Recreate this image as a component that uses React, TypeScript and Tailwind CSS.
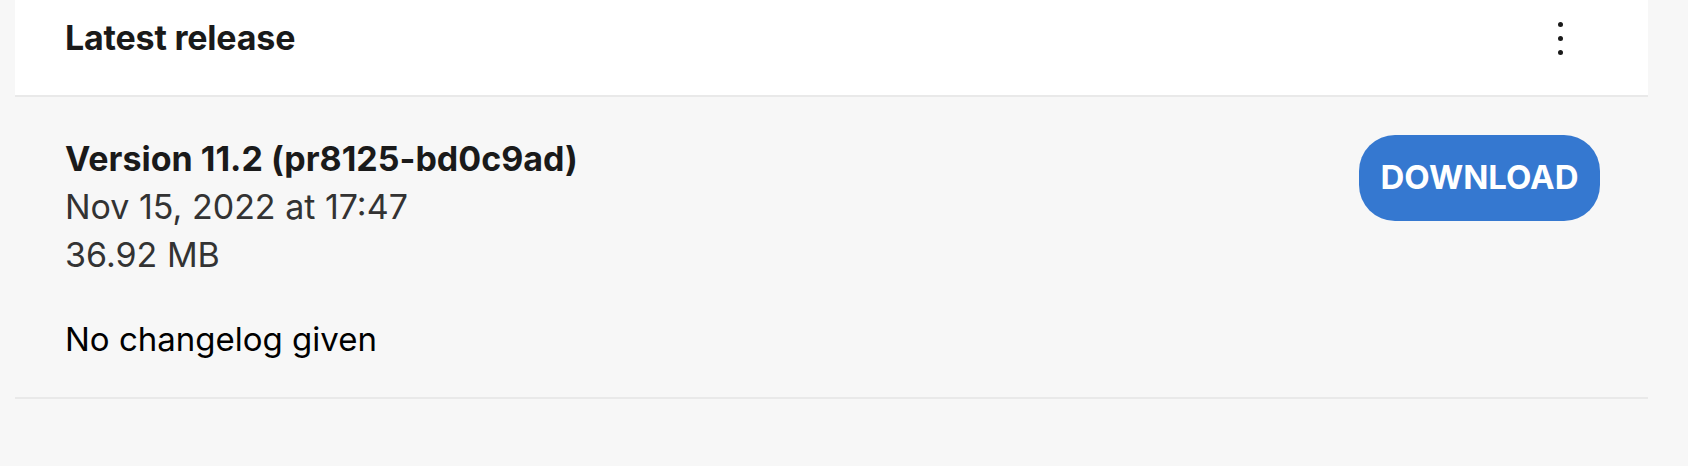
import React from 'react';

const App = () => {
  return (
    <div className="min-h-[466px] bg-[#f7f7f7] text-[#1a1a1a] font-['Inter',sans-serif]">
      <div className="ml-[15px] w-[1633px]">
        {/* Header */}
        <div className="flex h-[97px] items-start justify-between border-b-2 border-[#e9e9e9] bg-white pl-[50px] pr-[82px] pt-[14px]">
          <h2 className="text-[34px] font-bold leading-[48px] tracking-[-0.2px]">Latest release</h2>
          <button className="mt-[6px] flex h-[37px] w-[12px] flex-col items-center justify-center gap-[9px]">
            <span className="h-[5px] w-[5px] rounded-full bg-[#1a1a1a]" />
            <span className="h-[5px] w-[5px] rounded-full bg-[#1a1a1a]" />
            <span className="h-[5px] w-[5px] rounded-full bg-[#1a1a1a]" />
          </button>
        </div>

        {/* Release */}
        <div className="border-b-2 border-[#e9e9e9] pb-[34px] pl-[50px] pr-[48px] pt-[38px]">
          <div className="flex items-start justify-between">
            <div className="text-[34px] leading-[48px]">
              <div className="font-bold text-[#1a1a1a]">Version 11.2 (pr8125-bd0c9ad)</div>
              <div className="text-[#333333]">Nov 15, 2022 at 17:47</div>
              <div className="text-[#333333]">36.92 MB</div>
            </div>
            <button className="flex h-[86px] w-[241px] items-center justify-center rounded-[36px] bg-[#3578d0] text-[33px] font-bold text-white">
              DOWNLOAD
            </button>
          </div>
          <p className="mt-[36px] text-[33px] leading-[48px] text-black">No changelog given</p>
        </div>
      </div>
    </div>
  );
};

export default App;
